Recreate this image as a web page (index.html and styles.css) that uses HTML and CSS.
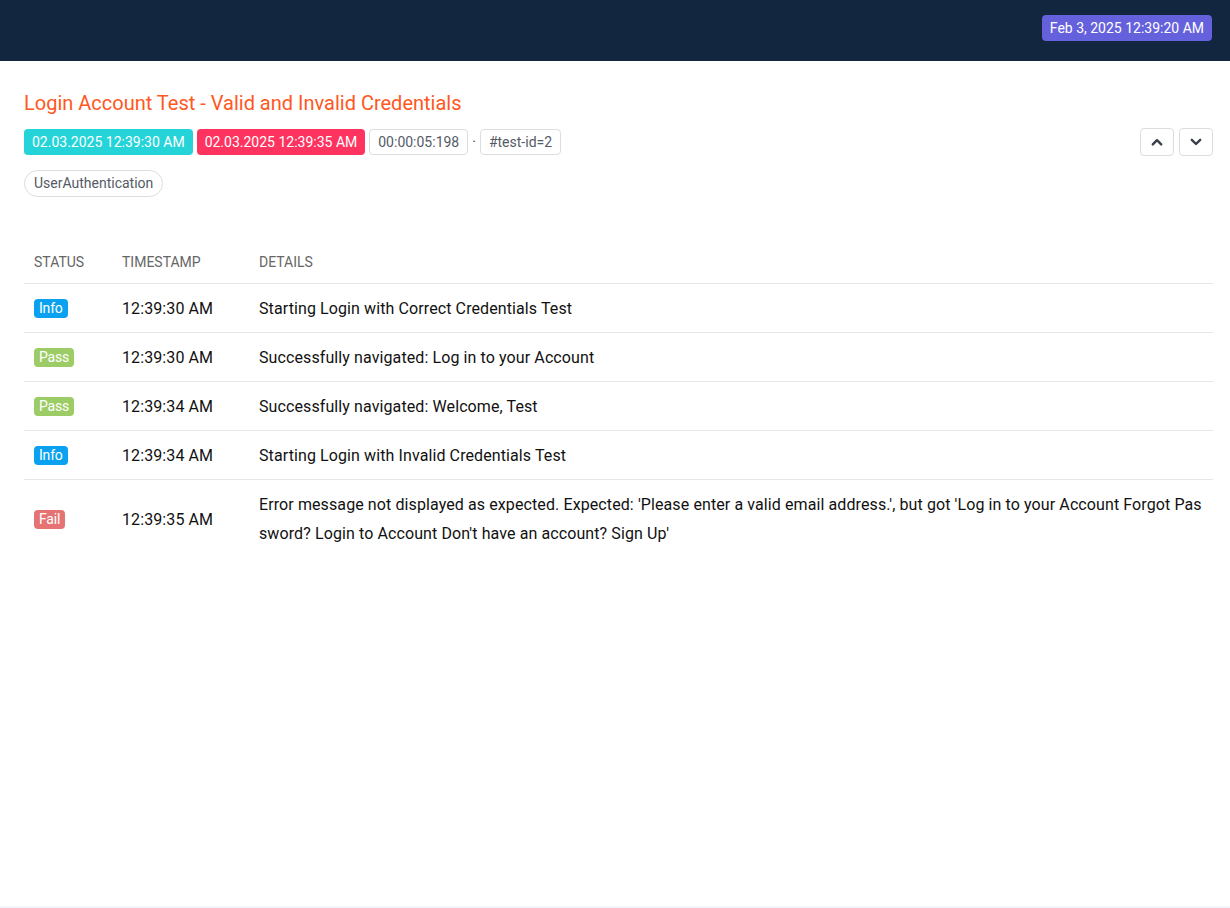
FILE: index.html
```html
<!DOCTYPE html>
<html lang="en">
<head>
<meta charset="utf-8">
<title>Login Account Test</title>
<link rel="stylesheet" href="styles.css">
</head>
<body>
<header class="topbar">
  <span class="date-badge">Feb 3, 2025 12:39:20 AM</span>
</header>
<main class="content">
  <h1 class="test-name">Login Account Test - Valid and Invalid Credentials</h1>
  <div class="meta-row">
    <div class="meta">
      <span class="badge badge-start">02.03.2025 12:39:30 AM</span>
      <span class="badge badge-end">02.03.2025 12:39:35 AM</span>
      <span class="badge badge-outline">00:00:05:198</span>
      <span class="dot">·</span>
      <span class="badge badge-outline">#test-id=2</span>
    </div>
    <div class="nav-btns">
      <button class="nav-btn" type="button" aria-label="Previous">
        <svg width="12" height="12" viewBox="0 0 12 12"><path d="M1.8 8.4 L6 4.2 L10.2 8.4" fill="none" stroke="#3a3f4a" stroke-width="2.4" stroke-linecap="round" stroke-linejoin="round"/></svg>
      </button>
      <button class="nav-btn" type="button" aria-label="Next">
        <svg width="12" height="12" viewBox="0 0 12 12"><path d="M1.8 3.8 L6 8 L10.2 3.8" fill="none" stroke="#3a3f4a" stroke-width="2.4" stroke-linecap="round" stroke-linejoin="round"/></svg>
      </button>
    </div>
  </div>
  <div class="tags">
    <span class="tag">UserAuthentication</span>
  </div>
  <table class="log-table">
    <thead>
      <tr>
        <th class="col-status">Status</th>
        <th class="col-time">Timestamp</th>
        <th>Details</th>
      </tr>
    </thead>
    <tbody>
      <tr>
        <td><span class="status status-info">Info</span></td>
        <td>12:39:30 AM</td>
        <td>Starting Login with Correct Credentials Test</td>
      </tr>
      <tr>
        <td><span class="status status-pass">Pass</span></td>
        <td>12:39:30 AM</td>
        <td>Successfully navigated: Log in to your Account</td>
      </tr>
      <tr>
        <td><span class="status status-pass">Pass</span></td>
        <td>12:39:34 AM</td>
        <td>Successfully navigated: Welcome, Test</td>
      </tr>
      <tr>
        <td><span class="status status-info">Info</span></td>
        <td>12:39:34 AM</td>
        <td>Starting Login with Invalid Credentials Test</td>
      </tr>
      <tr>
        <td><span class="status status-fail">Fail</span></td>
        <td>12:39:35 AM</td>
        <td class="details-wrap">Error message not displayed as expected. Expected: 'Please enter a valid email address.', but got 'Log in to your Account Forgot Password? Login to Account Don't have an account? Sign Up'</td>
      </tr>
    </tbody>
  </table>
</main>
<div class="page-bottom"></div>
</body>
</html>
```

FILE: styles.css
```css
* { box-sizing: border-box; }

html, body {
  margin: 0;
  padding: 0;
}

body {
  font-family: Roboto, "Liberation Sans", sans-serif;
  color: #111;
  background: #fff;
  height: 908px;
  display: flex;
  flex-direction: column;
}

.topbar {
  height: 61px;
  background: #12263f;
  display: flex;
  align-items: flex-start;
  justify-content: flex-end;
  padding: 15px 18px 0 0;
}

.date-badge {
  display: inline-block;
  background: #6561dd;
  color: #fff;
  font-size: 14px;
  line-height: 26px;
  height: 26px;
  padding: 0 8px;
  border-radius: 4px;
}

.content {
  flex: 1;
  padding: 29px 17px 0 24px;
}

.test-name {
  margin: 0;
  font-size: 20px;
  font-weight: 400;
  color: #ff5722;
  line-height: 26px;
}

.meta-row {
  display: flex;
  justify-content: space-between;
  align-items: center;
  margin-top: 12px;
}

.meta {
  display: flex;
  align-items: center;
  gap: 4px;
}

.badge {
  display: inline-block;
  font-size: 14px;
  height: 26px;
  line-height: 26px;
  padding: 0 8px;
  border-radius: 4px;
  color: #fff;
}

.badge-start { background: #24d4d8; }
.badge-end { background: #fe3360; }

.badge-outline {
  color: #555b66;
  background: #fff;
  border: 1px solid #dcdde0;
  line-height: 24px;
  padding: 0 8px;
}

.dot {
  color: #444;
  font-size: 14px;
  padding: 0;
}

.nav-btns {
  display: flex;
  gap: 5px;
}

.nav-btn {
  width: 34px;
  height: 28px;
  background: #fff;
  border: 1px solid #dcdde0;
  border-radius: 4px;
  display: flex;
  align-items: center;
  justify-content: center;
  padding: 0;
}

.tags {
  margin-top: 14px;
  display: flex;
}

.tag {
  display: inline-block;
  font-size: 14px;
  color: #555b66;
  height: 27px;
  line-height: 25px;
  padding: 0 9px;
  border: 1px solid #dcdde0;
  border-radius: 14px;
}

.log-table {
  width: 100%;
  border-collapse: collapse;
  margin-top: 43px;
}

.log-table th {
  text-align: left;
  font-size: 14px;
  font-weight: 400;
  text-transform: uppercase;
  color: #666;
  padding: 10px 10px 9px;
  line-height: 24px;
  border-bottom: 1px solid #e6e6e6;
}

.col-status { width: 88px; }
.col-time { width: 137px; }

.log-table td {
  font-size: 16px;
  line-height: 29px;
  padding: 10px 10px 9px;
  border-bottom: 1px solid #e6e6e6;
  vertical-align: middle;
  color: #111;
  letter-spacing: 0.1px;
}

.log-table tbody tr:last-child td {
  border-bottom: none;
}

.details-wrap {
  word-break: break-all;
}

.status {
  display: inline-block;
  font-size: 14px;
  line-height: 19px;
  height: 19px;
  padding: 0 5px;
  border-radius: 4px;
  color: #fff;
  letter-spacing: -0.2px;
  vertical-align: middle;
  position: relative;
  top: -1px;
}

.status-info { background: #0aa2f0; }
.status-pass { background: #9ccc65; }
.status-fail { background: #e57373; }

.page-bottom {
  height: 2px;
  background: #f2f5fa;
}
```
